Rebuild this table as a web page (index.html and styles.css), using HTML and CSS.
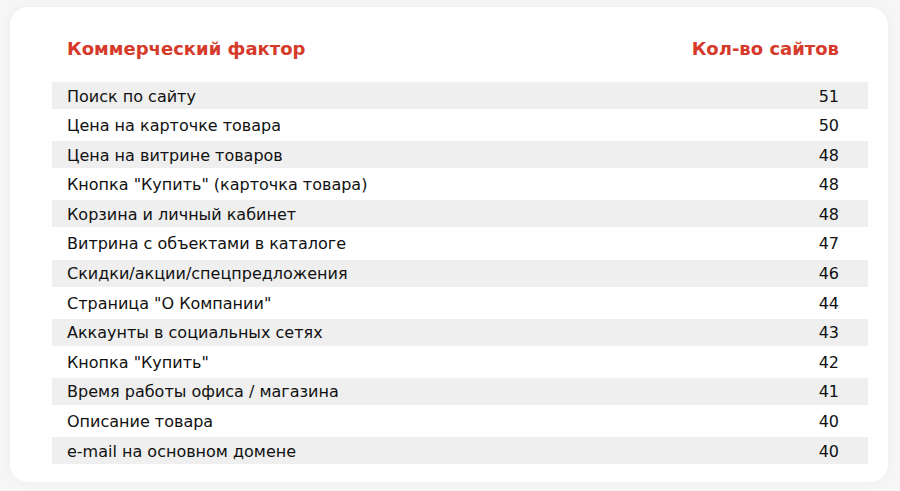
FILE: index.html
```html
<!DOCTYPE html>
<html lang="ru">
<head>
<meta charset="utf-8">
<link rel="stylesheet" href="styles.css">
</head>
<body>
<div class="card">
  <div class="head">
    <span>Коммерческий фактор</span>
    <span>Кол-во сайтов</span>
  </div>
  <div class="rows">
    <div class="row"><span>Поиск по сайту</span><span>51</span></div>
    <div class="row"><span>Цена на карточке товара</span><span>50</span></div>
    <div class="row"><span>Цена на витрине товаров</span><span>48</span></div>
    <div class="row"><span>Кнопка "Купить" (карточка товара)</span><span>48</span></div>
    <div class="row"><span>Корзина и личный кабинет</span><span>48</span></div>
    <div class="row"><span>Витрина с объектами в каталоге</span><span>47</span></div>
    <div class="row"><span>Скидки/акции/спецпредложения</span><span>46</span></div>
    <div class="row"><span>Страница "О Компании"</span><span>44</span></div>
    <div class="row"><span>Аккаунты в социальных сетях</span><span>43</span></div>
    <div class="row"><span>Кнопка "Купить"</span><span>42</span></div>
    <div class="row"><span>Время работы офиса / магазина</span><span>41</span></div>
    <div class="row"><span>Описание товара</span><span>40</span></div>
    <div class="row"><span>e-mail на основном домене</span><span>40</span></div>
  </div>
</div>
</body>
</html>
```
FILE: styles.css
```css
html, body {
  margin: 0;
  padding: 0;
  background: #f6f6f6;
}
body {
  padding: 7px 12px 9px 10px;
  font-family: "DejaVu Sans", "Noto Sans", sans-serif;
  color: #111;
}
.card {
  background: #fff;
  border-radius: 18px;
  box-shadow: 0 0 12px rgba(0,0,0,0.04);
  height: 475px;
  box-sizing: border-box;
  padding: 29px 20px 0 42px;
}
.head {
  display: flex;
  justify-content: space-between;
  padding: 0 29px 0 15px;
  height: 46px;
  color: #d63a2a;
  font-weight: 700;
  font-size: 18px;
  line-height: 26px;
}
.rows {
  display: grid;
  grid-auto-rows: 27px;
  row-gap: 2.6px;
}
.row {
  display: flex;
  justify-content: space-between;
  align-items: center;
  padding: 1px 29px 0 15px;
  font-size: 16px;
}
.row:nth-child(odd) {
  background: #efefef;
}
```
